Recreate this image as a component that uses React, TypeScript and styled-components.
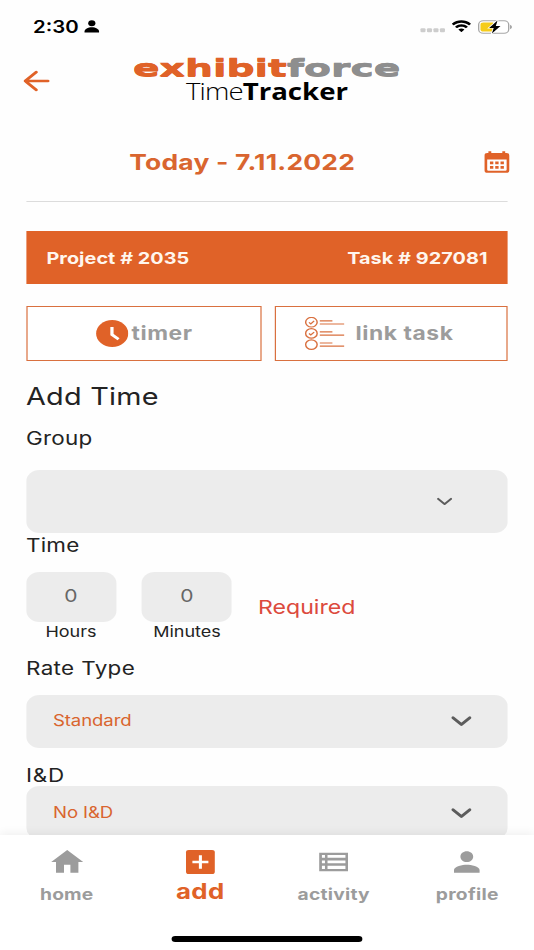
import React from "react";
import styled, { createGlobalStyle } from "styled-components";

const orange = "#e06228";
const grey = "#9c9c9c";

const Global = createGlobalStyle`
  * { box-sizing: border-box; }
  html, body { margin: 0; background: #fefefe; overflow: hidden; }
  body { font-family: Inter, "Liberation Sans", sans-serif; }
`;

/* The screen is laid out on a 445px grid and widened by a factor of 1.2. */
const Screen = styled.div`
  width: 445px;
  height: 950px;
  transform: scaleX(1.2);
  transform-origin: 0 0;
  display: flex;
  flex-direction: column;
  background: #fefefe;
  overflow: hidden;
`;

const StatusBar = styled.div`
  height: 53px;
  flex: none;
  display: flex;
  align-items: center;
  justify-content: space-between;
  padding: 0 18px 0 27.5px;
`;

const StatusGroup = styled.div<{ $gap: number }>`
  display: flex;
  align-items: center;
  gap: ${(p) => p.$gap}px;
`;

const Clock = styled.span`
  font-size: 17px;
  font-weight: 600;
  line-height: 20px;
  color: #000;
`;

const Header = styled.header`
  height: 55px;
  flex: none;
  display: grid;
  grid-template-columns: 60px 1fr 60px;
  align-items: center;
`;

const BackButton = styled.button`
  border: 0;
  padding: 0 0 0 18px;
  background: none;
  display: flex;
`;

const Logo = styled.div`
  display: flex;
  flex-direction: column;
  align-items: center;
`;

const Wordmark = styled.div`
  font: 700 23px/22px "DejaVu Sans", sans-serif;
  white-space: nowrap;
  color: ${orange};
  -webkit-text-stroke: 0.4px currentColor;
  text-shadow: 0 0.7px currentColor, 0 -0.5px currentColor;
  transform: scaleX(1.425);
`;

const WordmarkTail = styled.span`
  color: #8e8e8e;
`;

const Product = styled.div`
  font: 300 23px/25px "Open Sans", sans-serif;
  letter-spacing: -0.75px;
  color: #000;
  white-space: nowrap;
`;

const ProductStrong = styled.span`
  font-weight: 700;
  letter-spacing: 0;
`;

const Body = styled.main`
  flex: 1;
  min-height: 0;
  overflow: hidden;
  padding: 0 21.67px;
  display: flex;
  flex-direction: column;
`;

const DateRow = styled.div`
  height: 94px;
  flex: none;
  padding-top: 15px;
  border-bottom: 1.5px solid #dcdcdc;
  display: grid;
  grid-template-columns: 1fr 20px;
  align-items: center;
`;

const DateText = styled.div`
  padding-left: 86px;
  font-size: 22px;
  font-weight: 700;
  line-height: 28px;
  white-space: nowrap;
  color: #d9652f;
`;

const ProjectBar = styled.div`
  height: 53px;
  flex: none;
  margin-top: 29px;
  padding: 0 17px;
  background: ${orange};
  color: #fff6ee;
  display: flex;
  align-items: center;
  justify-content: space-between;
  font-size: 16.5px;
  font-weight: 700;
  white-space: nowrap;
`;

const Actions = styled.div`
  height: 55px;
  flex: none;
  margin-top: 21.5px;
  display: grid;
  grid-template-columns: 196px 194px;
  justify-content: space-between;
`;

const ActionButton = styled.button<{ $gap: number; $shift: number }>`
  border: 1.2px solid #d9703f;
  background: #fff;
  display: flex;
  align-items: center;
  padding: 0 0 0 ${(p) => p.$shift}px;
  gap: ${(p) => p.$gap}px;
  font: 700 19px/24px Inter, sans-serif;
  color: ${grey};
  white-space: nowrap;
`;

const ActionText = styled.span`
  padding-top: 2px;
  letter-spacing: 0.46px;
`;

const Title = styled.h1`
  margin: 20px 0 0;
  font-size: 24px;
  font-weight: 400;
  line-height: 32px;
  color: #232323;
  flex: none;
`;

const FieldLabel = styled.div<{ $top: number }>`
  margin-top: ${(p) => p.$top}px;
  flex: none;
  height: 22px;
  padding-top: 1px;
  font-size: 18.7px;
  line-height: 22px;
  color: #232323;
`;

const Select = styled.div<{ $height: number; $top: number; $right: number }>`
  flex: none;
  height: ${(p) => p.$height}px;
  margin-top: ${(p) => p.$top}px;
  border-radius: 11px;
  background: #ececec;
  display: flex;
  align-items: center;
  justify-content: space-between;
  padding: 0 ${(p) => p.$right}px 1px 22.5px;
  font-size: 15.5px;
  color: #d9652f;
`;

const TimeRow = styled.div`
  flex: none;
  margin-top: 16px;
  height: 68px;
  display: flex;
  align-items: flex-start;
  gap: 21.67px;
`;

const TimeField = styled.div`
  width: 75px;
  display: flex;
  flex-direction: column;
  align-items: center;
`;

const TimeBox = styled.div`
  width: 75px;
  height: 50.5px;
  border-radius: 11px;
  background: #ececec;
  display: flex;
  align-items: center;
  justify-content: center;
  padding-bottom: 2px;
  font-size: 17.5px;
  color: #666;
`;

const Unit = styled.div`
  font-size: 15px;
  line-height: 19px;
  color: #232323;
`;

const Required = styled.div`
  margin-top: 23px;
  font-size: 19.3px;
  line-height: 24px;
  color: #dc4a3d;
`;

const NavBar = styled.nav`
  height: 115px;
  flex: none;
  position: relative;
  background: #fff;
  box-shadow: 0 -2px 8px rgba(0, 0, 0, 0.06);
  display: flex;
  flex-direction: column;
  align-items: center;
  justify-content: space-between;
  padding-bottom: 8.5px;
`;

const Tabs = styled.div`
  width: 100%;
  display: grid;
  grid-template-columns: repeat(4, 1fr);
`;

const Tab = styled.div<{ $active?: boolean }>`
  display: flex;
  flex-direction: column;
  align-items: center;
  padding-top: 11px;
  color: ${(p) => (p.$active ? orange : grey)};
  font-size: ${(p) => (p.$active ? 21.5 : 16)}px;
  font-weight: 700;
  line-height: ${(p) => (p.$active ? 26 : 32)}px;
`;

const HomeIndicator = styled.div`
  width: 159px;
  height: 5.5px;
  border-radius: 3px;
  background: #000;
`;

const Fit = styled.span<{ $ls: number }>`
  letter-spacing: ${(p) => p.$ls}px;
  white-space: nowrap;
`;

const PERSON = "M12 12c2.21 0 4-1.79 4-4s-1.79-4-4-4-4 1.79-4 4 1.79 4 4 4zm0 2c-2.67 0-8 1.34-8 4v2h16v-2c0-2.66-5.33-4-8-4z";

const Chevron = ({ w, s }: { w: number; s: number }) => (
  <svg width={w} height={w * 0.75} viewBox={`0 0 ${w} ${w * 0.75}`} fill="none" stroke="#5c5c5c" strokeWidth={s} strokeLinecap="round" strokeLinejoin="round">
    <path d={`M${s / 2 + 0.2} ${w * 0.22}L${w / 2} ${w * 0.62}L${w - s / 2 - 0.2} ${w * 0.22}`} />
  </svg>
);

export default function App() {
  return (
    <>
      <Global />
      <Screen>
        <StatusBar>
          <StatusGroup $gap={4}>
            <Clock>2:30</Clock>
            <svg width="13" height="13" viewBox="0 0 13 13">
              <circle cx="6.5" cy="3.3" r="3" />
              <path d="M0.5 12.4C-0.2 9.6 3 7.3 6.5 7.3S13.2 9.6 12.5 12.4Z" />
            </svg>
          </StatusGroup>
          <StatusGroup $gap={5}>
            <svg width="21" height="13" viewBox="0 0 21 13" fill="#cdcdcd">
              <rect x="0.4" y="8.2" width="4.2" height="4" rx="1" />
              <rect x="5.800" y="8.2" width="4.2" height="4" rx="1" />
              <rect x="11.200" y="8.2" width="4.2" height="4" rx="1" />
              <rect x="16.600" y="8.2" width="4.2" height="4" rx="1" />
            </svg>
            <svg width="17" height="13" viewBox="0 0 17 13">
              <path d="M8.5 2.7c2.4 0 4.6.9 6.2 2.5.1.1.3.1.4 0l1.2-1.2c.1-.1.1-.3 0-.5C12-.7 5-.7.7 3.500c-.1.200-.1.400 0 .5l1.200 1.200c.1.1.3.1.4 0C3.900 3.600 6.100 2.700 8.500 2.700zM8.500 6.700c1.300 0 2.600.5 3.500 1.400.1.1.3.1.500 0l1.200-1.200c.1-.1.1-.4 0-.500-2.900-2.800-7.400-2.800-10.300 0-.1.1-.1.400 0 .500l1.200 1.200c.1.1.3.1.500 0 .9-.9 2.200-1.400 3.400-1.400zM10.800 9.300c.1.1.1.3 0 .400L8.700 12c-.1.1-.3.1-.4 0L6.200 9.700c-.1-.1-.1-.3 0-.4 1.300-1.100 3.300-1.100 4.600 0z" />
            </svg>
            <svg width="29" height="14" viewBox="0 0 29 14">
              <rect x="0.900" y="0.800" width="25" height="12.400" rx="3.800" fill="#fff" stroke="#a6a6a6" strokeWidth="1.100" />
              <path d="M4.800 2.400H13V11.600H4.800Q2.400 11.600 2.400 9.300V4.700Q2.400 2.400 4.800 2.400Z" fill="#f5cc1b" />
              <path d="M27 4.800Q28.700 5.600 28.700 7T27 9.200Z" fill="#a6a6a6" />
              <path d="M16.600 0.600L9.600 7.900H13.400L11.900 13.400L19.100 6H15.200Z" fill="#000" stroke="#fff" strokeWidth="1.400" paintOrder="stroke" />
            </svg>
          </StatusGroup>
        </StatusBar>

        <Header>
          <BackButton aria-label="Back">
            <svg width="24" height="24" viewBox="0 0 24 24" fill="none" stroke={orange} strokeWidth="2.500" strokeLinecap="round" strokeLinejoin="round">
              <path d="M22 12H3M12.300 3L3 12L12.300 21" />
            </svg>
          </BackButton>
          <Logo>
            <Wordmark>exhibit<WordmarkTail>force</WordmarkTail></Wordmark>
            <Product>Time<ProductStrong>Tracker</ProductStrong></Product>
          </Logo>
        </Header>

        <Body>
          <DateRow>
            <DateText><Fit $ls={0.2}>Today - 7.11.2022</Fit></DateText>
            <svg width="22" height="24" viewBox="0 0 22 24" overflow="visible">
              <path fillRule="evenodd" fill={orange} d="M4 1.200h2.400V3h9.200V1.200H18V3h1q2.400 0 2.400 2.400v15q0 2.400-2.400 2.400H3Q.8 22.800.8 20.400v-15Q.8 3 3 3h1zM3 9.600v10.200q0 1 1 1h14.200q1 0 1-1V9.600z" />
              <path fill={orange} d="M5.300 11.600h2.800v2.700H5.300zM9.700 11.600h2.800v2.700H9.700zM14.100 11.600h2.800v2.700h-2.800zM5.300 16h2.800v2.700H5.300zM9.700 16h2.800v2.700H9.700zM14.100 16h2.800v2.700h-2.800z" />
            </svg>
          </DateRow>

          <ProjectBar>
            <Fit $ls={0.05}>Project # 2035</Fit>
            <Fit $ls={0.07}>Task # 927081</Fit>
          </ProjectBar>

          <Actions>
            <ActionButton $gap={3} $shift={57}>
              <svg width="27" height="27" viewBox="0 0 27 27">
                <circle cx="13.500" cy="13.500" r="13.400" fill={orange} />
                <path d="M13.300 7V14.600L18.800 19.200" fill="none" stroke="#fff" strokeWidth="2.700" />
              </svg>
              <ActionText>timer</ActionText>
            </ActionButton>
            <ActionButton $gap={9} $shift={24}>
              <svg width="33" height="33" viewBox="0 0 33 33" fill="none" stroke="#d9703f" strokeWidth="1.200">
                <circle cx="5.500" cy="5.200" r="4.800" />
                <circle cx="5.500" cy="16.400" r="4.800" />
                <circle cx="5.500" cy="27.600" r="4.800" />
                <path d="M3.500 5.300L5 6.800L7.800 3.900M3.500 16.500L5 18L7.800 15.100" />
                <path d="M12.500 3.800H23M12.500 7H33M12.500 14.900H23M12.500 18.100H33M12.500 26H23M12.500 29.200H33" />
              </svg>
              <ActionText>link task</ActionText>
            </ActionButton>
          </Actions>

          <Title><Fit $ls={0.2}>Add Time</Fit></Title>
          <FieldLabel $top={14}><Fit $ls={0.2}>Group</Fit></FieldLabel>
          <Select $height={63.5} $top={21} $right={46}>
            <span />
            <Chevron w={13} s={1.9} />
          </Select>
          <FieldLabel $top={0.5}><Fit $ls={0.2}>Time</Fit></FieldLabel>
          <TimeRow>
            <TimeField>
              <TimeBox>0</TimeBox>
              <Unit><Fit $ls={0}>Hours</Fit></Unit>
            </TimeField>
            <TimeField>
              <TimeBox>0</TimeBox>
              <Unit><Fit $ls={0}>Minutes</Fit></Unit>
            </TimeField>
            <Required><Fit $ls={0}>Required</Fit></Required>
          </TimeRow>
          <FieldLabel $top={17}><Fit $ls={0.3}>Rate Type</Fit></FieldLabel>
          <Select $height={53} $top={16} $right={30}>
            <Fit $ls={-0.1}>Standard</Fit>
            <Chevron w={17} s={2.6} />
          </Select>
          <FieldLabel $top={16.5}><Fit $ls={0.6}>I&amp;D</Fit></FieldLabel>
          <Select $height={53} $top={0} $right={30}>
            <Fit $ls={-0.1}>No I&amp;D</Fit>
            <Chevron w={17} s={2.6} />
          </Select>
        </Body>

        <NavBar>
          <Tabs>
            <Tab>
              <svg width="32" height="32" viewBox="0 0 24 24" fill="currentColor"><path d="M10 20v-6h4v6h5v-8h3L12 3 2 12h3v8z" /></svg>
              <Fit $ls={0.15}>home</Fit>
            </Tab>
            <Tab $active>
              <svg width="32" height="32" viewBox="0 0 24 24" fill="currentColor">
                <rect x="3" y="3" width="18" height="18" rx="1.700" />
                <path d="M12 7V17M7 12H17" stroke="#fff" strokeWidth="1.900" />
              </svg>
              <Fit $ls={0.3}>add</Fit>
            </Tab>
            <Tab>
              <svg width="32" height="32" viewBox="0 0 24 24" fill="currentColor">
                <path fillRule="evenodd" d="M3 5h18v14H3zM4.700 6.700v2.200h1.900V6.700zM8.200 6.700v2.200h11.200V6.700zM4.700 10.800v2.200h1.900v-2.200zM8.200 10.800v2.200h11.200v-2.200zM4.700 14.900v2.300h1.900v-2.300zM8.200 14.900v2.300h11.200v-2.300z" />
              </svg>
              <Fit $ls={0.2}>activity</Fit>
            </Tab>
            <Tab>
              <svg width="32" height="32" viewBox="0 0 24 24" fill="currentColor"><path d={PERSON} /></svg>
              <Fit $ls={0.25}>profile</Fit>
            </Tab>
          </Tabs>
          <HomeIndicator />
        </NavBar>
      </Screen>
    </>
  );
}
